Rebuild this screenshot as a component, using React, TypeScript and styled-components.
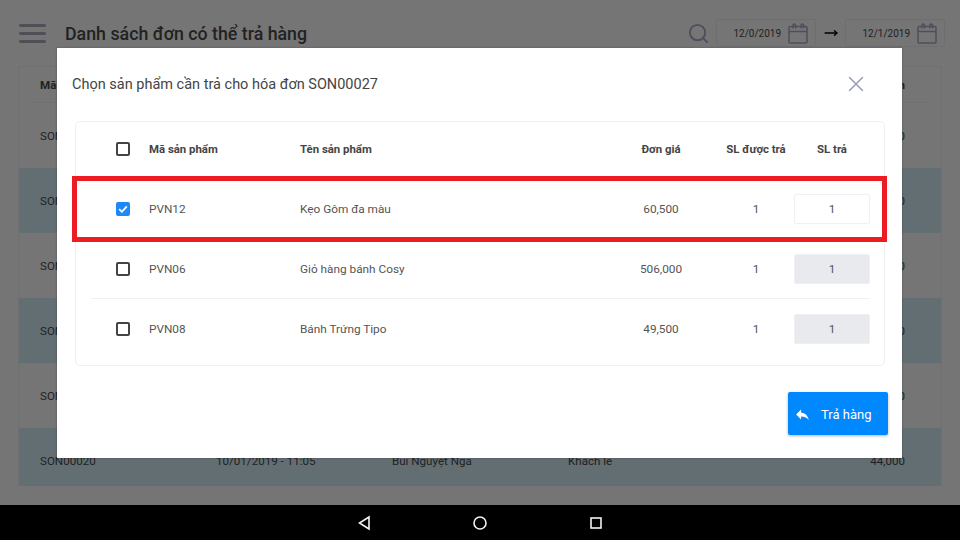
import React from "react";
import styled, { createGlobalStyle } from "styled-components";
import { Search, X, MoveRight } from "lucide-react";
import { MdReply } from "react-icons/md";

const Global = createGlobalStyle`
  html, body { margin: 0; padding: 0; width: 960px; height: 540px; overflow: hidden; background: #000; }
  body { font-family: Roboto, "Liberation Sans", sans-serif; }
`;

const Shell = styled.div`
  width: 960px;
  height: 540px;
  display: flex;
  flex-direction: column;
`;
const Screen = styled.div`
  position: relative;
  height: 505px;
  background: #ebebeb;
  overflow: hidden;
`;
const TopBar = styled.header`
  height: 66px;
  display: flex;
  align-items: center;
  padding: 0 15px 0 19px;
  box-sizing: border-box;
`;
const Burger = styled.div`
  width: 27px;
  height: 19px;
  display: flex;
  flex-direction: column;
  justify-content: space-between;
  margin-right: 19px;
  span { display: block; height: 3px; border-radius: 2px; background: #9fa1ae; }
`;
const PageTitle = styled.h1`
  margin: 0;
  flex: 1;
  font-size: 17.8px;
  font-weight: 500;
  color: #444;
`;
const SearchIcon = styled(Search)`
  width: 23px;
  height: 23px;
  color: #9a9eb8;
  margin-right: 6px;
`;
const DateBox = styled.div`
  width: 100px;
  height: 28px;
  box-sizing: border-box;
  border: 1px solid #dcdde3;
  border-radius: 2px;
  display: flex;
  align-items: center;
  justify-content: flex-end;
  padding-right: 7px;
  font-size: 10px;
  color: #444;
`;
const CalendarGlyph = styled.svg`
  width: 20px;
  height: 21px;
  margin-left: 7px;
  fill: none;
  stroke: #9a9eb8;
  stroke-width: 1.5;
`;
const Arrow = styled(MoveRight)`
  width: 14px;
  height: 14px;
  margin: 0 7px 0 8px;
  color: #000;
  stroke-width: 2.4;
`;
const ListCard = styled.section`
  margin: 0 18px;
  height: 420px;
  border: 1px solid #dfe0e4;
  border-bottom: none;
  border-radius: 4px 4px 0 0;
  box-sizing: border-box;
  overflow: hidden;
`;
const ListGrid = styled.div<{ $head?: boolean; $tint?: boolean }>`
  display: grid;
  grid-template-columns: 176px 176px 176px 1fr 120px;
  align-items: center;
  padding: 0 36px 0 21px;
  height: ${(p) => (p.$head ? "35px" : "65px")};
  font-size: 11.6px;
  font-weight: ${(p) => (p.$head ? 700 : 400)};
  color: #444;
  background: ${(p) => (p.$tint ? "#c7dde6" : "transparent")};
  & > :last-child { text-align: right; }
`;
const Rule = styled.div`
  height: 1px;
  margin: 0 14px;
  background: #dfe0e4;
`;
const Overlay = styled.div`
  position: absolute;
  inset: 0;
  background: rgba(0, 0, 0, 0.5);
`;
const Modal = styled.div`
  width: 845px;
  height: 410px;
  margin: 48px 0 0 57px;
  background: #fff;
  box-shadow: 0 0 2px rgba(0, 0, 0, 0.3);
  display: flex;
  flex-direction: column;
  position: relative;
`;
const ModalHead = styled.div`
  height: 73px;
  flex: none;
  padding: 0 33px 0 15px;
  display: flex;
  align-items: center;
  justify-content: space-between;
  font-size: 14.5px;
  color: #444;
`;
const CloseIcon = styled(X)`
  width: 26px;
  height: 26px;
  margin-top: -1px;
  color: #9a9eb8;
  stroke-width: 1.4;
`;
const TableCard = styled.div`
  margin: 0 17px 0 18px;
  height: 245px;
  box-sizing: border-box;
  border: 1px solid #eef0f6;
  border-radius: 5px;
  padding: 0 14px 0 15px;
`;
const Row = styled.div<{ $head?: boolean; $last?: boolean }>`
  display: grid;
  grid-template-columns: 58px 151px 1fr 96px 76px 76px;
  align-items: center;
  height: ${(p) => (p.$head ? "57px" : p.$last ? "59px" : "60px")};
  box-sizing: border-box;
  padding-bottom: ${(p) => (p.$head ? "3px" : "0")};
  border-bottom: ${(p) => (p.$last ? "none" : "1px solid #eef0f6")};
  font-size: ${(p) => (p.$head ? "11.4px" : "11.8px")};
  font-weight: ${(p) => (p.$head ? 700 : 400)};
  color: ${(p) => (p.$head ? "#444" : "#555")};
`;
const CheckCell = styled.div`
  padding-left: 25px;
  display: flex;
`;
const Check = styled.span<{ $on?: boolean }>`
  width: 14px;
  height: 14px;
  box-sizing: border-box;
  border-radius: 2px;
  border: ${(p) => (p.$on ? "none" : "2px solid #444")};
  background: ${(p) => (p.$on ? "#1e88f5" : "#fff")};
  display: flex;
  align-items: center;
  justify-content: center;
`;
const PriceCell = styled.div`
  text-align: center;
  padding-right: 18px;
`;
const CenterCell = styled.div`
  text-align: center;
`;
const QtyBox = styled.div<{ $off?: boolean }>`
  height: 30px;
  box-sizing: border-box;
  border: 1px solid #eef0f3;
  border-radius: 2px;
  background: ${(p) => (p.$off ? "#e9eaee" : "#fff")};
  display: flex;
  align-items: center;
  justify-content: center;
`;
const ModalFoot = styled.div`
  flex: 1;
  display: flex;
  justify-content: flex-end;
  align-items: flex-start;
  padding: 26px 14px 0 0;
`;
const ReturnButton = styled.button`
  width: 100px;
  height: 43px;
  border: none;
  border-radius: 2px;
  background: #0088ff;
  color: #fff;
  font-family: inherit;
  font-size: 13px;
  padding: 1px 0 0 6px;
  display: flex;
  align-items: center;
  box-shadow: 0 1px 3px rgba(0, 0, 0, 0.3);
  svg { width: 17px; height: 17px; margin-right: 10px; }
`;
const Highlight = styled.div`
  position: absolute;
  left: 15px;
  top: 128px;
  width: 815px;
  height: 66px;
  box-sizing: border-box;
  border: 5px solid #ed1c24;
`;
const NavBar = styled.nav`
  height: 35px;
  background: #000;
  display: flex;
  align-items: center;
  justify-content: center;
  gap: 100px;
  svg { width: 16px; height: 16px; fill: none; stroke: #f2f2f2; stroke-width: 1.6; }
`;

const listRows = [
  ["SON00027", "12/01/2019 - 09:12", "Nguyễn Thị Lan", "Khách lẻ", "156,000"],
  ["SON00026", "11/01/2019 - 16:40", "Trần Văn Minh", "Khách lẻ", "60,500"],
  ["SON00025", "11/01/2019 - 10:22", "Lê Thu Hà", "Khách lẻ", "90,000"],
  ["SON00023", "10/01/2019 - 15:30", "Phạm Hồng Anh", "Khách lẻ", "120,000"],
  ["SON00021", "10/01/2019 - 13:18", "Đỗ Minh Tâm", "Khách lẻ", "75,000"],
  ["SON00020", "10/01/2019 - 11:05", "Bùi Nguyệt Nga", "Khách lẻ", "44,000"],
];

const products = [
  { code: "PVN12", name: "Kẹo Gôm đa màu", price: "60,500", on: true },
  { code: "PVN06", name: "Giỏ hàng bánh Cosy", price: "506,000", on: false },
  { code: "PVN08", name: "Bánh Trứng Tipo", price: "49,500", on: false },
];

const Calendar = () => (
  <CalendarGlyph viewBox="0 0 20 21">
    <rect x="1" y="3.5" width="18" height="16.5" rx="1" />
    <path d="M1 8.5 H19" />
    <path d="M5 5.5 V2.2 a1.3 1.3 0 0 1 2.6 0 V5.5" />
    <path d="M13 5.5 V2.2 a1.3 1.3 0 0 1 2.6 0 V5.5" />
  </CalendarGlyph>
);

export default function App() {
  return (
    <Shell>
      <Global />
      <Screen>
        <TopBar>
          <Burger><span /><span /><span /></Burger>
          <PageTitle>Danh sách đơn có thể trả hàng</PageTitle>
          <SearchIcon />
          <DateBox>12/0/2019<Calendar /></DateBox>
          <Arrow />
          <DateBox>12/1/2019<Calendar /></DateBox>
        </TopBar>
        <ListCard>
          <ListGrid $head>
            <div>Mã hóa đơn</div><div>Thời gian</div><div>Khách hàng</div><div>Loại</div><div>Thành tiền</div>
          </ListGrid>
          <Rule />
          {listRows.map((r, i) => (
            <ListGrid key={r[0]} $tint={i % 2 === 1}>
              {r.map((c) => <div key={c}>{c}</div>)}
            </ListGrid>
          ))}
        </ListCard>
        <Overlay>
          <Modal>
            <ModalHead>
              <span>Chọn sản phẩm cần trả cho hóa đơn SON00027</span>
              <CloseIcon />
            </ModalHead>
            <TableCard>
              <Row $head>
                <CheckCell><Check /></CheckCell>
                <div>Mã sản phẩm</div>
                <div>Tên sản phẩm</div>
                <PriceCell>Đơn giá</PriceCell>
                <CenterCell>SL được trả</CenterCell>
                <CenterCell>SL trả</CenterCell>
              </Row>
              {products.map((p, i) => (
                <Row key={p.code} $last={i === products.length - 1}>
                  <CheckCell>
                    <Check $on={p.on}>
                      {p.on && (
                        <svg width="10" height="10" viewBox="0 0 10 10" fill="none" stroke="#fff" strokeWidth="1.8">
                          <path d="M1.2 5.2 L3.9 7.8 L8.8 2.4" />
                        </svg>
                      )}
                    </Check>
                  </CheckCell>
                  <div>{p.code}</div>
                  <div>{p.name}</div>
                  <PriceCell>{p.price}</PriceCell>
                  <CenterCell>1</CenterCell>
                  <QtyBox $off={!p.on}>1</QtyBox>
                </Row>
              ))}
            </TableCard>
            <ModalFoot>
              <ReturnButton><MdReply />Trả hàng</ReturnButton>
            </ModalFoot>
            <Highlight />
          </Modal>
        </Overlay>
      </Screen>
      <NavBar>
        <svg viewBox="0 0 16 16"><path d="M13 2 L3.5 8 L13 14 Z" /></svg>
        <svg viewBox="0 0 16 16"><circle cx="8" cy="8" r="6" /></svg>
        <svg viewBox="0 0 16 16"><rect x="3" y="3" width="10" height="10" /></svg>
      </NavBar>
    </Shell>
  );
}
